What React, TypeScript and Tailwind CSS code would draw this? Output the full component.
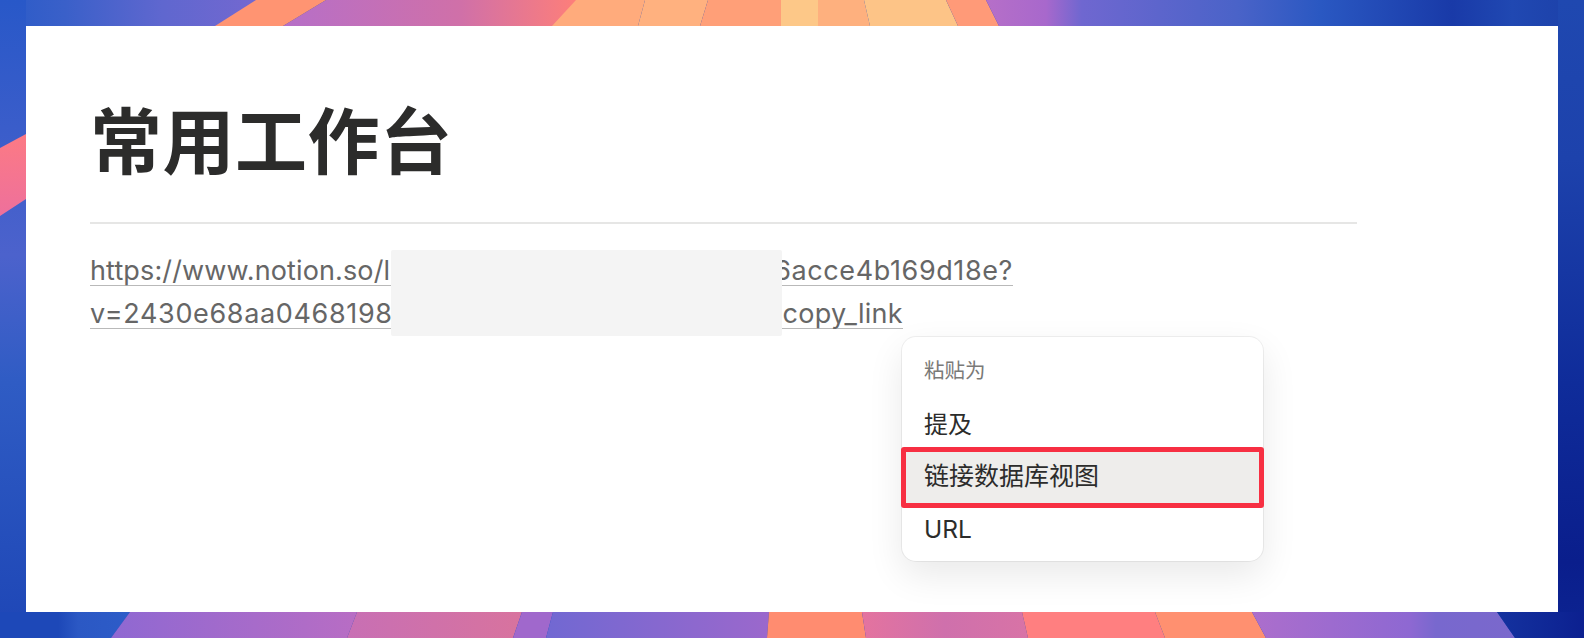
const Wallpaper = () => (
  <svg className="absolute inset-0 h-full w-full" viewBox="0 0 1584 638" preserveAspectRatio="none" aria-hidden="true">
    <defs>
      <linearGradient id="top1" x1="0" x2="1" y1="0" y2="0">
        <stop offset="0" stopColor="#2a5bc8" />
        <stop offset="0.25" stopColor="#3a60c9" />
        <stop offset="0.62" stopColor="#5f67cf" />
        <stop offset="1" stopColor="#7468d0" />
      </linearGradient>
      <linearGradient id="top2" x1="0" x2="1" y1="0" y2="0">
        <stop offset="0" stopColor="#b66fc8" />
        <stop offset="0.6" stopColor="#d070a8" />
        <stop offset="1" stopColor="#ff7f78" />
      </linearGradient>
      <linearGradient id="top3" x1="0" x2="1" y1="0" y2="0">
        <stop offset="0" stopColor="#b66fc8" />
        <stop offset="0.1" stopColor="#a868cc" />
        <stop offset="0.16" stopColor="#6f67d0" />
        <stop offset="0.42" stopColor="#4a63c8" />
        <stop offset="0.56" stopColor="#2a58c2" />
        <stop offset="0.78" stopColor="#193aa8" />
        <stop offset="0.88" stopColor="#2048b2" />
        <stop offset="1" stopColor="#1c40a8" />
      </linearGradient>
      <linearGradient id="left" x1="0" x2="0" y1="0" y2="1">
        <stop offset="0" stopColor="#2858c8" />
        <stop offset="0.4" stopColor="#4c62cc" />
        <stop offset="0.6" stopColor="#2f5cc4" />
        <stop offset="1" stopColor="#1e46b6" />
      </linearGradient>
      <linearGradient id="right" x1="0" x2="0" y1="0" y2="1">
        <stop offset="0" stopColor="#1f48b0" />
        <stop offset="0.25" stopColor="#1d42ac" />
        <stop offset="0.6" stopColor="#0f2c9a" />
        <stop offset="0.88" stopColor="#0a1e8c" />
        <stop offset="1" stopColor="#0c2492" />
      </linearGradient>
      <linearGradient id="pink" x1="0" x2="0" y1="0" y2="1">
        <stop offset="0" stopColor="#fc7a84" />
        <stop offset="1" stopColor="#ee709c" />
      </linearGradient>
      <linearGradient id="bot1" x1="0" x2="1" y1="0" y2="0">
        <stop offset="0" stopColor="#8f68d2" />
        <stop offset="1" stopColor="#b86dc4" />
      </linearGradient>
      <linearGradient id="bot2" x1="0" x2="1" y1="0" y2="0">
        <stop offset="0" stopColor="#c86fb4" />
        <stop offset="1" stopColor="#d8739e" />
      </linearGradient>
      <linearGradient id="bot3" x1="0" x2="1" y1="0" y2="0">
        <stop offset="0" stopColor="#7168d2" />
        <stop offset="1" stopColor="#9b68cc" />
      </linearGradient>
      <linearGradient id="bot4" x1="0" x2="1" y1="0" y2="0">
        <stop offset="0" stopColor="#e4739f" />
        <stop offset="0.5" stopColor="#cf70ac" />
        <stop offset="1" stopColor="#d873a6" />
      </linearGradient>
      <linearGradient id="bot5" x1="0" x2="1" y1="0" y2="0">
        <stop offset="0" stopColor="#ac6ecc" />
        <stop offset="0.6" stopColor="#8e68d2" />
        <stop offset="0.7" stopColor="#7868ce" />
        <stop offset="1" stopColor="#7a68cc" />
      </linearGradient>
      <linearGradient id="bot0" x1="0" x2="1" y1="0" y2="0">
        <stop offset="0" stopColor="#1d48b8" />
        <stop offset="0.45" stopColor="#1d48b8" />
        <stop offset="0.6" stopColor="#2b58c4" />
        <stop offset="1" stopColor="#2d5cc8" />
      </linearGradient>
      <linearGradient id="bot6" x1="0" x2="1" y1="0" y2="0">
        <stop offset="0" stopColor="#14329f" />
        <stop offset="1" stopColor="#0c2090" />
      </linearGradient>
    </defs>
    <rect width="1584" height="638" fill="#1d48b8" />
    <polygon points="0,0 260,0 218,26 0,26" fill="url(#top1)" />
    <polygon points="326,0 580,0 556,26 283,26" fill="url(#top2)" />
    <polygon points="256,0 326,0 283,26 215,26" fill="#ff9472" />
    <polygon points="576,0 645,0 638,26 552,26" fill="#ffab7c" />
    <polygon points="645,0 708,0 700,26 638,26" fill="#ffb17f" />
    <polygon points="708,0 781,0 781,26 700,26" fill="#ff9f78" />
    <polygon points="781,0 818,0 818,26 781,26" fill="#fdc888" />
    <polygon points="818,0 864,0 870,26 818,26" fill="#feb07e" />
    <polygon points="864,0 946,0 958,26 870,26" fill="#fdc487" />
    <polygon points="946,0 986,0 999,26 958,26" fill="#ff9a78" />
    <polygon points="986,0 1584,0 1584,26 999,26" fill="url(#top3)" />
    <rect x="0" y="0" width="26" height="638" fill="url(#left)" />
    <polygon points="0,148 26,134 26,199 0,216" fill="url(#pink)" />
    <rect x="1558" y="0" width="26" height="638" fill="url(#right)" />
    <polygon points="0,612 130,612 111,638 0,638" fill="url(#bot0)" />
    <polygon points="130,612 357,612 347,638 111,638" fill="url(#bot1)" />
    <polygon points="357,612 522,612 513,638 347,638" fill="url(#bot2)" />
    <polygon points="522,612 553,612 546,638 513,638" fill="#a068cc" />
    <polygon points="553,612 769,612 767,638 546,638" fill="url(#bot3)" />
    <polygon points="769,612 862,612 866,638 767,638" fill="#ff8c70" />
    <polygon points="862,612 1022,612 1028,638 866,638" fill="url(#bot4)" />
    <polygon points="1022,612 1155,612 1165,638 1028,638" fill="#ff7f80" />
    <polygon points="1155,612 1252,612 1266,638 1165,638" fill="#ff9070" />
    <polygon points="1252,612 1497,612 1515,638 1266,638" fill="url(#bot5)" />
    <polygon points="1497,612 1584,612 1584,638 1515,638" fill="url(#bot6)" />
  </svg>
);

const cjk = "font-['Inter','Noto_Sans_CJK_SC',sans-serif]";

export default function App() {
  return (
    <div className={`relative h-[638px] w-[1584px] overflow-hidden p-[26px] ${cjk}`}>
      <Wallpaper />
      <main className="relative h-[586px] w-[1532px] bg-white pl-[64px] pt-[66px]">
        <h1 className="h-[90px] text-[72px] font-bold leading-[90px] tracking-[0.5px] text-[#2c2c2b] font-['Noto_Sans_CJK_SC',sans-serif]">
          常用工作台
        </h1>
        <div className="mt-[40px] h-[2px] w-[1267px] bg-[#e6e6e5]" />
        <div className="mt-[19px] w-fit text-[27px] leading-[28px] text-[#666666] [font-family:'Inter',sans-serif]">
          <div className="flex h-[43px] w-[923px] items-end justify-between border-b border-[#b9b9b9]">
            <span className="tracking-[0.13px]">https://www.notion.so/l</span>
            <span className="tracking-[0.6px]">6acce4b169d18e?</span>
          </div>
          <div className="flex h-[43px] w-[813px] items-end justify-between border-b border-[#b9b9b9]">
            <span className="tracking-[0.65px]">v=2430e68aa0468198</span>
            <span className="tracking-[0.3px]">copy_link</span>
          </div>
        </div>
        <div className="absolute left-[365px] top-[224px] h-[86px] w-[391px] rounded-[2px] bg-[#f4f4f4]" />
        <div className="absolute left-[876px] top-[311px] h-[224px] w-[361px] rounded-[14px] bg-white shadow-[0_14px_36px_rgba(0,0,0,0.09),0_0_0_1px_rgba(0,0,0,0.06)]">
          <div className="flex h-[62px] items-center px-[22px] pt-[6px] text-[20.5px] text-[#7a7a78]">粘贴为</div>
          <div className="flex h-[52px] items-center px-[22px] text-[24px] text-[#2c2c2b]">提及</div>
          <div className="relative flex h-[52px] items-center bg-[#eeedeb] px-[22px] text-[25px] text-[#2c2c2b]">
            链接数据库视图
            <div className="absolute -inset-x-px -bottom-[5px] -top-[4px] rounded-[3px] border-[5px] border-[#f72f42]" />
          </div>
          <div className="flex h-[52px] items-center px-[22px] text-[24.5px] text-[#2c2c2b]">URL</div>
        </div>
      </main>
    </div>
  );
}
